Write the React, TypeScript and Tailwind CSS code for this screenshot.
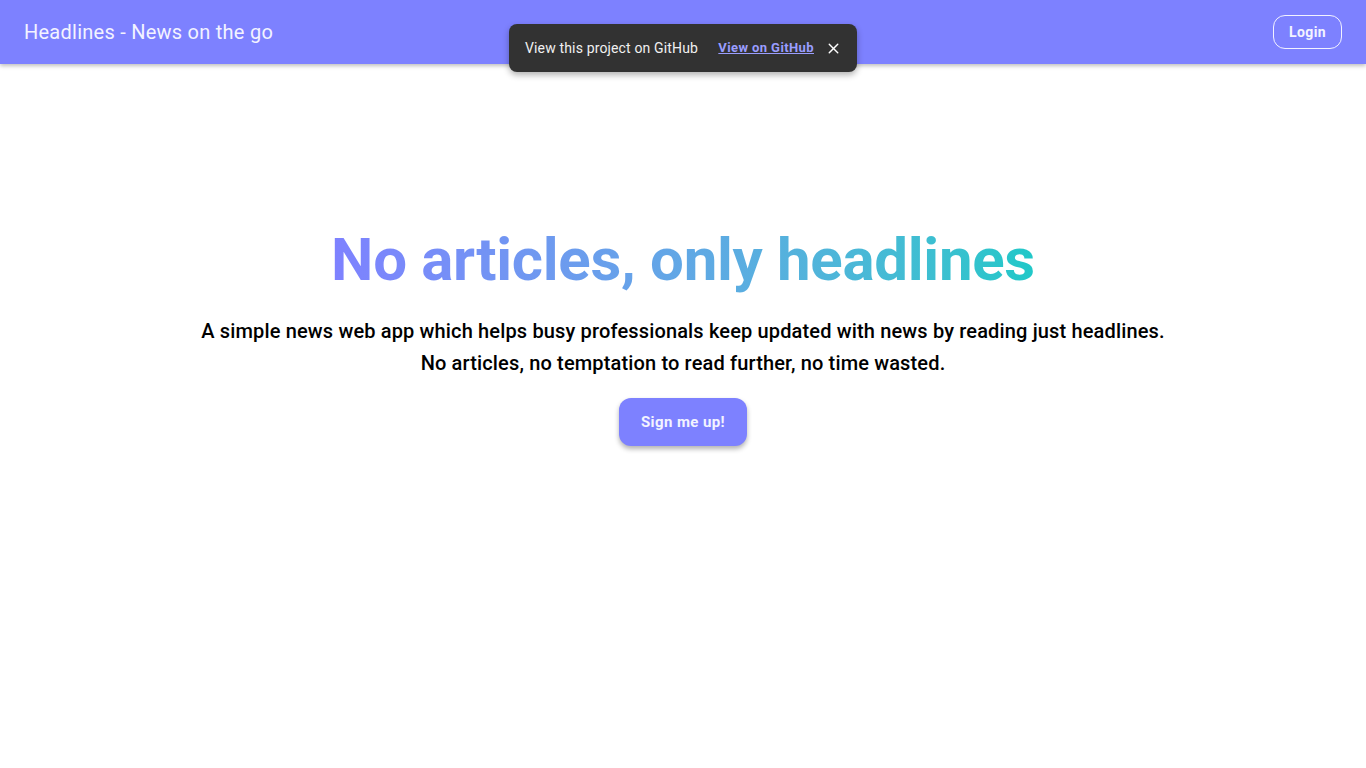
import { X } from "lucide-react";

const App = () => {
  return (
    <div className="min-h-screen bg-white font-['Roboto',sans-serif]">
      {/* Header */}
      <header className="relative h-16 bg-[#7d81ff] shadow-[0_2px_4px_rgba(0,0,0,0.25)] flex items-center justify-between px-6">
        <h1 className="text-[20px] tracking-[0.25px] text-[#f3f3ff] font-normal">Headlines - News on the go</h1>
        <button className="h-[34px] px-[15px] rounded-xl border border-white/90 text-[14px] tracking-[0.4px] font-bold text-[#f3f3ff]">
          Login
        </button>

        {/* Snackbar */}
        <div className="absolute left-[509px] top-6 w-[348px] h-12 rounded-lg bg-[#323232] shadow-[0_3px_6px_rgba(0,0,0,0.3)] flex items-center pl-4 pr-[15px]">
          <span className="text-[14px] tracking-[0.15px] text-[#f0f0f0]">View this project on GitHub</span>
          <a className="ml-auto text-[13px] tracking-[0.4px] font-bold text-[#9a9dff] underline">View on GitHub</a>
          <X size={17} strokeWidth={2} className="ml-[11px] text-white" />
        </div>
      </header>

      {/* Hero */}
      <main className="flex flex-col items-center pt-[160px]">
        <h2 className="text-[60px] leading-[72px] font-bold tracking-[-0.3px] bg-gradient-to-r from-[#7e81ff] to-[#1fc8c8] bg-clip-text text-transparent">
          No articles, only headlines
        </h2>
        <p className="mt-[19px] text-[20px] leading-8 tracking-[0.15px] font-medium text-black text-center">
          A simple news web app which helps busy professionals keep updated with news by reading just headlines.
          <br />
          No articles, no temptation to read further, no time wasted.
        </p>
        <button className="mt-[19px] w-32 h-12 rounded-xl bg-[#7d81ff] text-[15px] tracking-[0.4px] font-bold text-[#f3f3ff] shadow-[0_3px_5px_rgba(0,0,0,0.3)]">
          Sign me up!
        </button>
      </main>
    </div>
  );
};

export default App;
